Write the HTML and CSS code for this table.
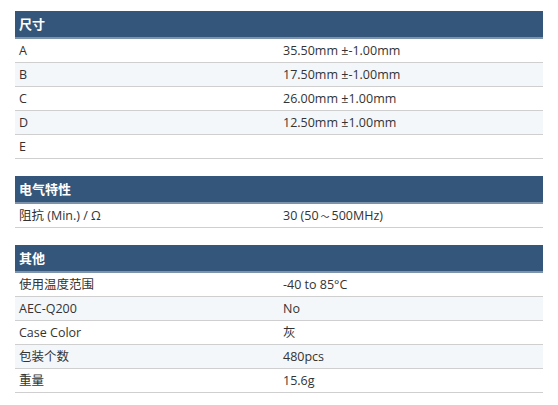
FILE: index.html
```html
<!DOCTYPE html>
<html lang="zh">
<head>
<meta charset="utf-8">
<link rel="stylesheet" href="styles.css">
</head>
<body>
<div class="page">
  <section class="spec">
    <div class="head">尺寸</div>
    <div class="row"><div class="cell">A</div><div class="cell">35.50mm ±-1.00mm</div></div>
    <div class="row"><div class="cell">B</div><div class="cell">17.50mm ±-1.00mm</div></div>
    <div class="row"><div class="cell">C</div><div class="cell">26.00mm ±1.00mm</div></div>
    <div class="row"><div class="cell">D</div><div class="cell">12.50mm ±1.00mm</div></div>
    <div class="row"><div class="cell">E</div><div class="cell"></div></div>
  </section>
  <section class="spec">
    <div class="head">电气特性</div>
    <div class="row"><div class="cell">阻抗 (Min.) / Ω</div><div class="cell">30 (50<span class="tilde">～</span>500MHz)</div></div>
  </section>
  <section class="spec">
    <div class="head">其他</div>
    <div class="row"><div class="cell">使用温度范围</div><div class="cell">-40 to 85°C</div></div>
    <div class="row"><div class="cell">AEC-Q200</div><div class="cell">No</div></div>
    <div class="row"><div class="cell">Case Color</div><div class="cell">灰</div></div>
    <div class="row"><div class="cell">包装个数</div><div class="cell">480pcs</div></div>
    <div class="row"><div class="cell">重量</div><div class="cell">15.6g</div></div>
  </section>
</div>
</body>
</html>
```
FILE: styles.css
```css
html, body {
  margin: 0;
  padding: 0;
  background: #fff;
}
.page {
  padding: 11px 15px 0 15px;
  display: flex;
  flex-direction: column;
  gap: 17px;
  font-family: "Open Sans", "Noto Sans CJK SC", sans-serif;
  font-size: 12.5px;
  color: #333;
}
.spec {
  width: 528px;
  display: flex;
  flex-direction: column;
}
.head {
  background: #34567a;
  color: #fff;
  font-weight: bold;
  font-size: 13px;
  height: 26px;
  line-height: 26px;
  padding: 0 4px;
  border-bottom: 2px solid #7d93ab;
  font-family: "Noto Sans CJK SC", sans-serif;
}
.row {
  display: grid;
  grid-template-columns: 1fr 1fr;
  height: 23px;
  border-bottom: 1px solid #cfcfcf;
}
.row:nth-child(odd) {
  background: #f4f7fa;
}
.cell {
  padding: 0 4px;
  line-height: 23px;
  white-space: nowrap;
}
.tilde {
  font-size: 9px;
  padding: 0 2px;
}
```
